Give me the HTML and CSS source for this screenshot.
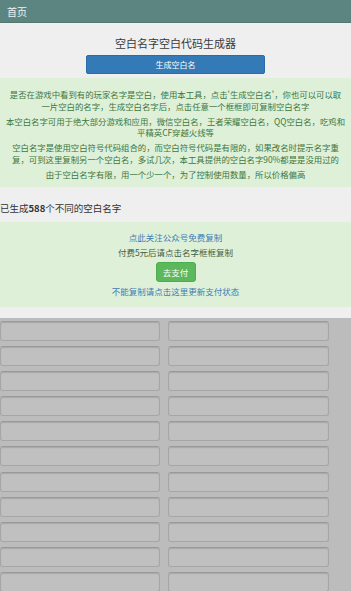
FILE: index.html
```html
<!DOCTYPE html>
<html lang="zh-CN">
<head>
<meta charset="utf-8">
<title>首页</title>
<link rel="stylesheet" href="styles.css">
</head>
<body>
<header class="topbar">首页</header>
<main class="page">
  <h1 class="title">空白名字空白代码生成器</h1>
  <div class="gen-wrap"><button class="btn-primary">生成空白名</button></div>
  <section class="alert">
    <p>是否在游戏中看到有的玩家名字是空白，使用本工具，点击'生成空白名'，你也可以可以取<br>一片空白的名字，生成空白名字后，点击任意一个框框即可复制空白名字</p>
    <p>本空白名字可用于绝大部分游戏和应用，微信空白名，王者荣耀空白名，QQ空白名，吃鸡和<br>平精英CF穿越火线等</p>
    <p>空白名字是使用空白符号代码组合的，而空白符号代码是有限的，如果改名时提示名字重<br>复，可到这里复制另一个空白名，多试几次，本工具提供的空白名字90%都是是没用过的</p>
    <p>由于空白名字有限，用一个少一个，为了控制使用数量，所以价格偏高</p>
  </section>
  <div class="count">已生成<b>588</b>个不同的空白名字</div>
  <section class="pay">
    <a class="link">点此关注公众号免费复制</a>
    <div class="pay-note">付费5元后请点击名字框框复制</div>
    <button class="btn-success">去支付</button>
    <a class="link">不能复制请点击这里更新支付状态</a>
  </section>
</main>
<section class="names">
  <div class="cell"></div><div class="cell"></div>
  <div class="cell"></div><div class="cell"></div>
  <div class="cell"></div><div class="cell"></div>
  <div class="cell"></div><div class="cell"></div>
  <div class="cell"></div><div class="cell"></div>
  <div class="cell"></div><div class="cell"></div>
  <div class="cell"></div><div class="cell"></div>
  <div class="cell"></div><div class="cell"></div>
  <div class="cell"></div><div class="cell"></div>
  <div class="cell"></div><div class="cell"></div>
  <div class="cell"></div><div class="cell"></div>
  <div class="cell"></div><div class="cell"></div>
</section>
</body>
</html>
```

FILE: styles.css
```css
html, body {
  margin: 0;
  padding: 0;
  height: 100%;
  overflow: hidden;
}
body {
  background: #bcbcbc;
  font-family: "Noto Sans CJK SC", "Noto Sans", sans-serif;
  color: #333;
}
.topbar {
  height: 23px;
  line-height: 23px;
  background: #5c8581;
  color: #eef3f2;
  font-size: 10px;
  padding-left: 7px;
  border-bottom: 1px solid #54776f;
  box-sizing: border-box;
}
.page {
  background: #efefef;
  padding: 13px 0 11px;
}
.title {
  margin: 0;
  font-size: 11px;
  font-weight: normal;
  line-height: 14px;
  text-align: center;
  color: #3a3a3a;
}
.gen-wrap {
  display: flex;
  justify-content: center;
  margin-top: 5px;
}
.btn-primary {
  width: 179px;
  height: 19px;
  border: 1px solid #2c6aa8;
  border-radius: 2px;
  background: #337ab7;
  color: #fff;
  font-family: inherit;
  font-size: 8px;
  padding: 0;
}
.alert {
  margin-top: 4px;
  background: #dff0d8;
  color: #3c763d;
  padding: 11px 3px 7px;
  text-align: center;
  font-size: 8.4px;
  line-height: 11.5px;
}
.alert p {
  margin: 0 0 3.5px;
}
.alert p:last-child {
  margin-bottom: 0;
}
.count {
  margin-top: 14px;
  font-size: 9.5px;
  line-height: 14px;
  color: #333;
}
.count b {
  font-weight: bold;
}
.pay {
  margin-top: 7px;
  background: #dff0d8;
  padding: 8px 0 8px;
  display: flex;
  flex-direction: column;
  align-items: center;
  font-size: 8.5px;
  line-height: 15px;
}
.link {
  color: #3f7bb4;
}
.pay-note {
  color: #3f5f3f;
}
.btn-success {
  margin: 2px 0;
  width: 40px;
  height: 20px;
  border: 1px solid #4cae4c;
  border-radius: 3px;
  background: #5cb85c;
  color: #fff;
  font-family: inherit;
  font-size: 8.5px;
  padding: 0;
}
.names {
  display: grid;
  grid-template-columns: 160px 161px;
  column-gap: 8px;
  row-gap: 5.1px;
  padding-top: 3px;
  background: #bcbcbc;
}
.cell {
  height: 20px;
  box-sizing: border-box;
  background: #c0c0c0;
  border: 1px solid #a6a6a6;
  border-top-color: #999;
  border-radius: 3px;
  box-shadow: inset 0 1px 1px rgba(0, 0, 0, 0.12);
}
```
